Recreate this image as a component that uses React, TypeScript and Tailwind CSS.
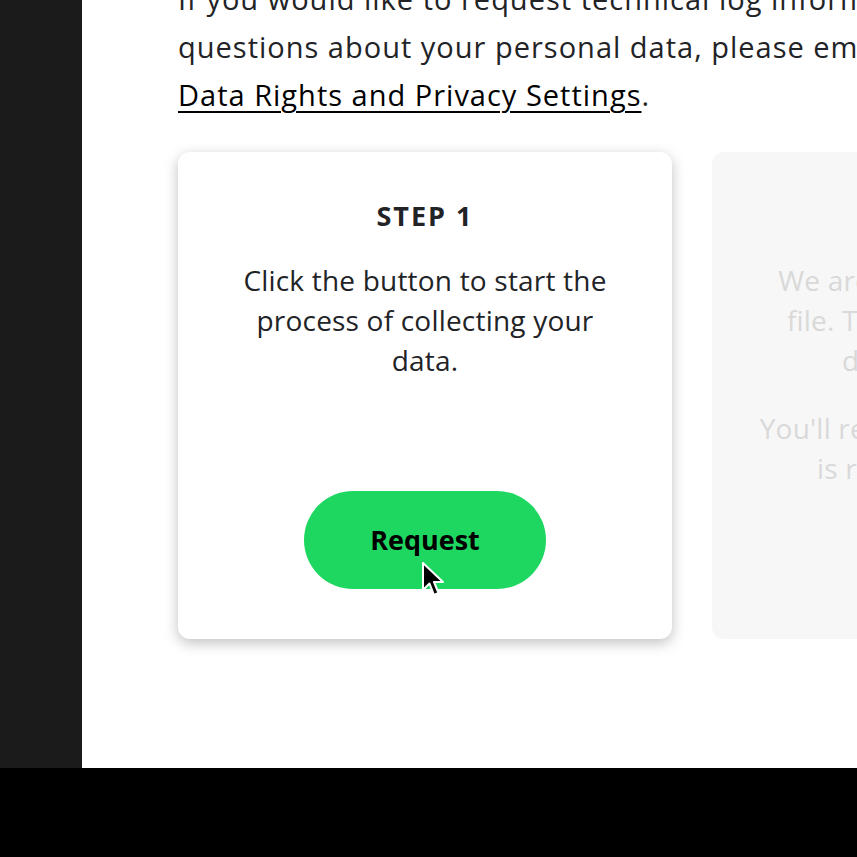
export default function App() {
    return (
        <div className="w-[857px] h-[857px] overflow-hidden bg-black flex flex-col" style={{ fontFamily: "'Open Sans', 'Noto Sans', sans-serif" }}>
            <div className="flex h-[768px]">
                <aside className="w-[82px] shrink-0 bg-[#1b1b1b]" />
                <main className="flex-1 bg-white overflow-hidden pl-[96px]">
                    <div className="-mt-[25px] text-[29px] leading-[48px] tracking-[1px] text-[#222326] whitespace-nowrap">
                        <p>If you would like to request technical log information or have any other</p>
                        <p>questions about your personal data, please email privacy@spotify.com or visit</p>
                        <p>
                            <a href="#" className="text-black underline underline-offset-[5px] decoration-[2px]">Data Rights and Privacy Settings</a>.
                        </p>
                    </div>

                    <div className="flex gap-[40px] mt-[33px]">
                        <div className="relative w-[494px] h-[487px] shrink-0 rounded-[12px] bg-white shadow-[0_4px_14px_rgba(0,0,0,0.25)] flex flex-col items-center px-[40px] pt-[46px] pb-[50px] text-center">
                            <h2 className="text-[27px] leading-[36px] font-bold tracking-[2px] text-[#222326]">STEP 1</h2>
                            <p className="mt-[26px] text-[28px] leading-[40px] tracking-[0.2px] text-[#222326]">
                                Click the button to start the<br />process of collecting your<br />data.
                            </p>
                            <button className="mt-auto w-[242px] h-[98px] rounded-full bg-[#1ed760] text-black text-[27px] font-bold cursor-pointer">
                                Request
                            </button>
                            <svg className="absolute left-[244px] top-[410px]" width="24" height="37" viewBox="0 0 24 37">
                                <path d="M1 1 L1 28 L7.5 21.5 L12 33 L16.5 31 L12 20 L21 20 Z" fill="black" stroke="white" strokeWidth="2" strokeLinejoin="round" />
                            </svg>
                        </div>
                        <div className="w-[494px] h-[487px] shrink-0 rounded-[12px] bg-[#f7f7f7] flex flex-col items-center px-[40px] pt-[46px] text-center text-[#d9d9d9]">
                            <h2 className="text-[27px] leading-[36px] font-bold tracking-[2px]">STEP 2</h2>
                            <p className="mt-[26px] text-[28px] leading-[40px] tracking-[0.2px] whitespace-nowrap">
                                We are now preparing your<br />file. This can take up to 30<br />days to complete.
                            </p>
                            <p className="mt-[28px] text-[28px] leading-[40px] tracking-[0.2px] whitespace-nowrap">
                                You'll receive an email when it<br />is ready to download.
                            </p>
                        </div>
                    </div>
                </main>
            </div>
            <div className="flex-1 bg-black" />
        </div>
    );
}
